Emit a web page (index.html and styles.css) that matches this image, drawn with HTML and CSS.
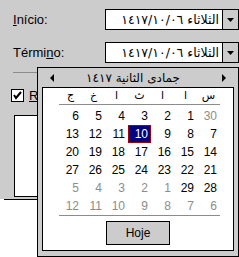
FILE: index.html
```html
<!DOCTYPE html>
<html lang="pt">
<head>
    <meta charset="UTF-8">
    <title>Período</title>
    <link rel="stylesheet" href="styles.css">
</head>
<body>
<div class="dialog">
    <div class="row">
        <label class="lbl"><u>I</u>nício:</label>
        <div class="combo">
            <div class="combo-text" dir="rtl">الثلاثاء ١٤١٧/١٠/٠٦</div>
            <div class="combo-btn"><svg width="7" height="4"><polygon points="0,0 7,0 3.5,4" fill="#000"/></svg></div>
        </div>
    </div>
    <div class="row row-end">
        <label class="lbl">Térmi<u>n</u>o:</label>
        <div class="combo">
            <div class="combo-text" dir="rtl">الثلاثاء ١٤١٧/١٠/٠٦</div>
            <div class="combo-btn"><svg width="7" height="4"><polygon points="0,0 7,0 3.5,4" fill="#000"/></svg></div>
        </div>
    </div>
    <div class="sep"></div>
    <div class="check-row">
        <span class="check"><svg width="11" height="11"><polyline points="2,5 4,8 9,2" fill="none" stroke="#000" stroke-width="2"/></svg></span>
        <span class="check-lbl"><u>R</u></span>
    </div>
    <div class="list"></div>
</div>
<div class="edge"></div>

<!-- calendário aberto por cima do formulário -->
<div class="popup">
    <div class="cal-head">
        <svg width="4" height="8"><polygon points="4,0 4,8 0,4" fill="#000"/></svg>
        <span class="cal-title" dir="rtl">جمادى الثانية ١٤١٧</span>
        <svg width="4" height="8"><polygon points="0,0 0,8 4,4" fill="#000"/></svg>
    </div>
    <div class="cal-body">
        <div class="days">
            <span>ج</span><span>خ</span><span>ا</span><span>ث</span><span>ا</span><span>ا</span><span>س</span>
        </div>
        <div class="line"></div>
        <div class="grid">
            <span>6</span><span>5</span><span>4</span><span>3</span><span>2</span><span>1</span><span class="off">30</span>
            <span>13</span><span>12</span><span>11</span><span class="sel">10</span><span>9</span><span>8</span><span>7</span>
            <span>20</span><span>19</span><span>18</span><span>17</span><span>16</span><span>15</span><span>14</span>
            <span>27</span><span>26</span><span>25</span><span>24</span><span>23</span><span>22</span><span>21</span>
            <span class="off">5</span><span class="off">4</span><span class="off">3</span><span class="off">2</span><span class="off">1</span><span>29</span><span>28</span>
            <span class="off">12</span><span class="off">11</span><span class="off">10</span><span class="off">9</span><span class="off">8</span><span class="off">7</span><span class="off">6</span>
        </div>
        <div class="line"></div>
        <div class="cal-foot">
            <button class="today">Hoje</button>
        </div>
    </div>
</div>
</body>
</html>
```

FILE: styles.css
```css
* {
    margin: 0;
    padding: 0;
    box-sizing: border-box;
}

body {
    position: relative;
    width: 239px;
    height: 257px;
    overflow: hidden;
    background: #ffffff;
    color: #000000;
    font-family: "Liberation Sans", "DejaVu Sans", sans-serif;
    font-size: 12px;
}

.dialog {
    height: 199px;
    padding-top: 9px;
    background: #cccccc;
}

.row {
    display: flex;
    align-items: center;
    height: 21px;
    padding-left: 13px;
}

.row-end {
    margin-top: 12px;
}

.lbl {
    width: 92px;
    font-size: 13px;
}

.combo {
    display: flex;
    width: 134px;
    height: 21px;
    border: 1px solid #000000;
    background: #ffffff;
}

.combo-text {
    flex: 1;
    padding-right: 3px;
    line-height: 19px;
    font-family: "DejaVu Sans", sans-serif;
    font-size: 12.5px;
    white-space: nowrap;
    overflow: hidden;
}

.combo-btn {
    display: flex;
    align-items: center;
    justify-content: center;
    width: 16px;
    border-left: 1px solid #000000;
    background: #cccccc;
}

.sep {
    height: 1px;
    margin: 9px 0 0 13px;
    background: #8c8c8c;
}

.check-row {
    display: flex;
    align-items: center;
    height: 13px;
    margin-top: 16px;
    padding-left: 11px;
}

.check {
    display: flex;
    align-items: center;
    justify-content: center;
    width: 13px;
    height: 13px;
    border: 1px solid #000000;
    background: #ffffff;
}

.check-lbl {
    margin-left: 5px;
    font-size: 13px;
}

.list {
    width: 200px;
    height: 82px;
    margin: 13px 0 0 14px;
    border: 1px solid #000000;
    background: #ffffff;
}

.edge {
    height: 1px;
    margin-left: 4px;
    background: #000000;
}

.popup {
    position: absolute;
    left: 37px;
    top: 67px;
    width: 202px;
    height: 190px;
    padding: 0 4px 5px 4px;
    border: 1px solid #000000;
    background: #cccccc;
}

.cal-head {
    display: flex;
    align-items: center;
    justify-content: space-between;
    height: 19px;
    padding: 0 8px;
}

.cal-title {
    font-family: "DejaVu Sans", sans-serif;
    font-size: 12px;
    margin-right: 10px;
}

.cal-body {
    height: 164px;
    border: 1px solid #000000;
    background: #ffffff;
}

.days, .grid {
    display: grid;
    grid-template-columns: repeat(7, 23px);
    margin-left: 16px;
}

.days span {
    height: 16px;
    line-height: 16px;
    text-align: center;
    font-family: "DejaVu Sans", sans-serif;
    font-size: 11px;
}

.line {
    width: 161px;
    height: 1px;
    margin-left: 16px;
    background: #8c8c8c;
}

.grid {
    margin-top: 2px;
}

.grid span {
    height: 18px;
    padding-right: 3px;
    line-height: 18px;
    text-align: right;
}

.grid .off {
    color: #8c8c8c;
}

.grid .sel {
    border: 1px solid #a00000;
    background: #000080;
    color: #ffffff;
    line-height: 16px;
    padding-right: 2px;
}

.cal-foot {
    display: flex;
    justify-content: center;
    padding-top: 5px;
}

.today {
    width: 64px;
    height: 24px;
    border: 1px solid #000000;
    background: #cccccc;
    font-family: "Liberation Sans", sans-serif;
    font-size: 12px;
    color: #000000;
}
```
